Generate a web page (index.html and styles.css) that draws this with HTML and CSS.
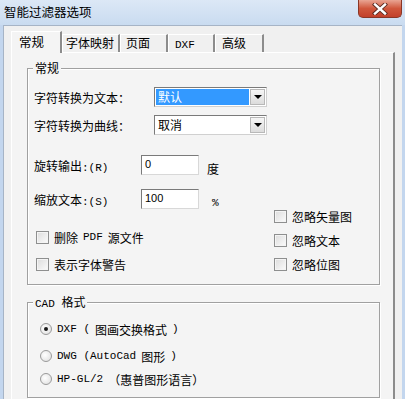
FILE: index.html
```html
<!DOCTYPE html>
<html>
<head>
  <title>智能过滤器选项</title>
  <meta charset="UTF-8" />
  <link rel="stylesheet" href="styles.css">
</head>
<body>
  <div class="window">
    <div class="titlebar">
      <div class="title">智能过滤器选项</div>
      <div class="close">
        <svg width="16" height="12" viewBox="0 0 16 12">
          <path d="M3 1.5 L13 10.5 M13 1.5 L3 10.5" stroke="#5a2a20" stroke-width="4.2" stroke-linecap="square"/>
          <path d="M3 1.5 L13 10.5 M13 1.5 L3 10.5" stroke="#ffffff" stroke-width="2.4" stroke-linecap="square"/>
        </svg>
      </div>
    </div>

    <div class="client">
      <div class="tabs">
        <div class="tab active">常规</div>
        <div class="tab t2">字体映射</div>
        <div class="tab t3">页面</div>
        <div class="tab t4"><span class="en">DXF</span></div>
        <div class="tab t5">高级</div>
      </div>

      <div class="panel">
        <div class="group g1">
          <div class="legend">常规</div>

          <div class="field">
            <span class="label wide">字符转换为文本：</span>
            <div class="combo">
              <div class="combo-text selected">默认</div>
              <div class="combo-btn"><span class="arrow"></span></div>
            </div>
          </div>

          <div class="field f2">
            <span class="label wide">字符转换为曲线：</span>
            <div class="combo">
              <div class="combo-text">取消</div>
              <div class="combo-btn"><span class="arrow"></span></div>
            </div>
          </div>

          <div class="field f3">
            <span class="label">旋转输出<span class="en">:(R)</span></span>
            <div class="edit">0</div>
            <span class="unit deg">度</span>
          </div>

          <div class="field f4">
            <span class="label">缩放文本<span class="en">:(S)</span></span>
            <div class="edit">100</div>
            <span class="unit pct"><span class="en">%</span></span>
          </div>

          <div class="opts">
            <div class="col left">
              <label class="check"><span class="box"></span>删除<span class="en"> PDF </span>源文件</label>
              <label class="check"><span class="box"></span>表示字体警告</label>
            </div>
            <div class="col right">
              <label class="check"><span class="box"></span>忽略矢量图</label>
              <label class="check"><span class="box"></span>忽略文本</label>
              <label class="check"><span class="box"></span>忽略位图</label>
            </div>
          </div>
        </div>

        <div class="group g2">
          <div class="legend"><span class="en">CAD </span>格式</div>
          <label class="radio r1"><span class="dot on"></span><span class="en">DXF (</span>图画交换格式<span class="en">)</span></label>
          <label class="radio r2"><span class="dot"></span><span class="en">DWG (AutoCad </span>图形<span class="en">)</span></label>
          <label class="radio r3"><span class="dot"></span><span class="en">HP-GL/2</span>（惠普图形语言）</label>
        </div>
      </div>
    </div>
  </div>
</body>
</html>
```

FILE: styles.css
```css
body {
  margin: 0;
  width: 405px;
  height: 399px;
  overflow: hidden;
  background: #c3d6ee;
  font-family: "Noto Sans CJK SC", "Noto Sans", sans-serif;
  font-size: 12px;
  color: #000;
}

.en {
  font-family: "Liberation Mono", monospace;
  font-size: 11px;
}

.window {
  display: flex;
  flex-direction: column;
  height: 399px;
}

.titlebar {
  height: 25px;
  display: flex;
  justify-content: space-between;
  align-items: flex-start;
  background: linear-gradient(#dce8f6, #c9dbf0);
}

.title {
  padding: 3px 0 0 4px;
  line-height: 18px;
  font-size: 12.5px;
}

.close {
  width: 44px;
  height: 18px;
  margin-right: 3px;
  box-sizing: border-box;
  border: 1px solid #8a3626;
  border-top: none;
  border-radius: 0 0 5px 5px;
  background: linear-gradient(#e9a593, #d0573c 50%, #c2402a);
  display: flex;
  align-items: center;
  justify-content: center;
}

.client {
  flex: 1;
  margin: 0 3px;
  padding: 5px 7px 0 7px;
  background: #f0f0f0;
  border-top: 1px solid #a6b4c6;
  border-left: 1px solid #a6b4c6;
  display: flex;
  flex-direction: column;
}

/* tabs */
.tabs {
  display: flex;
  align-items: flex-end;
  height: 21px;
  position: relative;
  z-index: 1;
}

.tab {
  box-sizing: border-box;
  height: 18px;
  padding-left: 5px;
  line-height: 16px;
  background: #f0f0f0;
  border-top: 1px solid #fff;
  border-left: 1px solid #fff;
  border-right: 2px solid #8c8c8c;
}

.tab.active {
  height: 22px;
  margin-bottom: -1px;
  width: 51px;
  padding-left: 7px;
  line-height: 19px;
  background: #f4f4f4;
  font-size: 12.5px;
}

.t2 { width: 58px; padding-left: 3px; }
.t3 { width: 48px; }
.t4 { width: 47px; padding-left: 6px; }
.t5 { width: 49px; padding-left: 6px; }

.panel {
  flex: 1;
  background: #f4f4f4;
  border-top: 1px solid #fff;
  border-left: 1px solid #fff;
  border-right: 2px solid #8c8c8c;
  padding: 15px 13px 0 15px;
}

/* group boxes */
.group {
  position: relative;
  border: 1px solid #a0a0a0;
  box-shadow: 1px 1px 0 #fff, inset 1px 1px 0 #fff;
  padding: 18px 0 0 6px;
}

.g1 {
  height: 197px;
}

.g2 {
  margin-top: 17px;
  height: 76px;
}

.legend {
  position: absolute;
  top: -8px;
  left: 5px;
  padding: 0 2px;
  line-height: 14px;
  background: #f4f4f4;
}

.field {
  display: flex;
  align-items: center;
  height: 20px;
}

.f2 { margin-top: 8px; }
.f3 { margin-top: 20px; }
.f4 { margin-top: 14px; }

.label {
  width: 107px;
}

.label.wide {
  width: 120px;
}

/* combo box */
.combo {
  box-sizing: border-box;
  width: 113px;
  height: 20px;
  display: flex;
  border: 1px solid;
  border-color: #7a7a7a #d0d0d0 #d0d0d0 #7a7a7a;
  background: #fff;
  padding: 1px;
}

.combo-text {
  flex: 1;
  line-height: 16px;
  padding-left: 2px;
}

.combo-text.selected {
  background: #3399ff;
  color: #fff;
}

.combo-btn {
  width: 15px;
  box-sizing: border-box;
  margin-left: 1px;
  background: linear-gradient(#f6f6f6, #dcdcdc);
  border: 1px solid #b8b8b8;
  display: flex;
  align-items: center;
  justify-content: center;
}

.arrow {
  width: 0;
  height: 0;
  border-left: 4px solid transparent;
  border-right: 4px solid transparent;
  border-top: 4px solid #000;
}

/* edit boxes */
.edit {
  box-sizing: border-box;
  width: 58px;
  height: 20px;
  padding-left: 3px;
  line-height: 17px;
  background: #fff;
  border: 1px solid;
  border-color: #7a7a7a #d8d8d8 #d8d8d8 #7a7a7a;
  font-family: "Liberation Sans", sans-serif;
  font-size: 11px;
}

.unit.deg {
  margin-left: 8px;
  margin-top: 6px;
}

.unit.pct {
  margin-left: 13px;
  margin-top: 3px;
}

/* check boxes */
.opts {
  display: flex;
}

.col {
  display: flex;
  flex-direction: column;
}

.col.left {
  flex: 1;
  padding: 21px 0 0 2px;
  gap: 13px;
}

.col.right {
  width: 105px;
  gap: 10px;
}

.check {
  display: flex;
  align-items: center;
  height: 14px;
  gap: 5px;
}

.box {
  box-sizing: border-box;
  width: 13px;
  height: 13px;
  border: 1px solid #8e8f8f;
  background: linear-gradient(135deg, #dcdcdc, #fbfbfb);
  box-shadow: inset 0 0 0 1px #f4f4f4;
}

/* radio buttons */
.radio {
  display: flex;
  align-items: center;
  height: 16px;
  gap: 5px;
  padding-left: 6px;
}

.r2 { margin-top: 11px; }
.r3 { margin-top: 7px; }

.dot {
  box-sizing: border-box;
  width: 12px;
  height: 12px;
  border-radius: 50%;
  border: 1px solid #9a9a9a;
  background: radial-gradient(circle at 40% 40%, #ffffff, #dcdcdc);
  display: flex;
  align-items: center;
  justify-content: center;
}

.dot.on::after {
  content: "";
  width: 4px;
  height: 4px;
  border-radius: 50%;
  background: #1a1a1a;
}
```
